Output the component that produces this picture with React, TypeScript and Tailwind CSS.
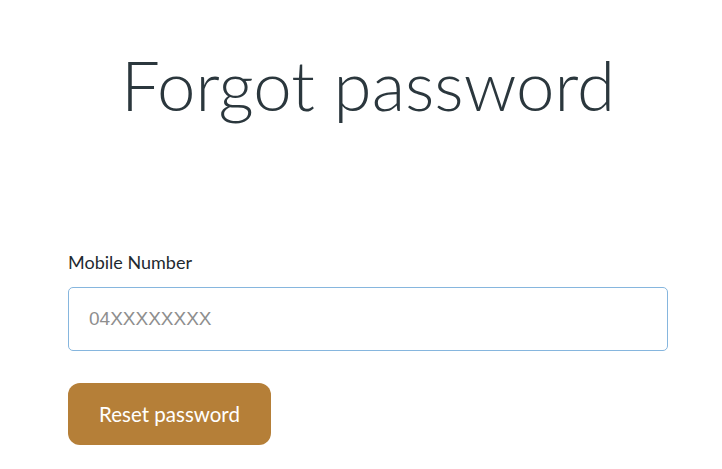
export default function App() {
  return (
    <div className="bg-white pt-[40px] pb-[20px]" style={{ fontFamily: 'Lato, "Open Sans", sans-serif' }}>
      <div className="ml-[68px] w-[600px]">
        <h1 className="text-center text-[69px] font-light leading-[90px] text-[#2b373d]">
          Forgot password
        </h1>
        <form className="mt-[120px]" onSubmit={(e) => e.preventDefault()}>
          <label htmlFor="mobile" className="block text-[18px] leading-[24px] text-[#1f2a30]">
            Mobile Number
          </label>
          <input
            id="mobile"
            type="tel"
            autoFocus
            placeholder="04XXXXXXXX"
            className="mt-[13px] block h-[64px] w-full rounded-[5px] border border-[#86b6de] px-[20px] text-[19px] text-[#333] outline-none placeholder:text-[#8e8e8e]"
            style={{ fontFamily: '"Liberation Sans", Arial, sans-serif' }}
          />
          <button
            type="submit"
            className="mt-[32px] h-[62px] w-[203px] rounded-[12px] bg-[#b57f38] text-[20.5px] text-white"
          >
            Reset password
          </button>
        </form>
      </div>
    </div>
  );
}
